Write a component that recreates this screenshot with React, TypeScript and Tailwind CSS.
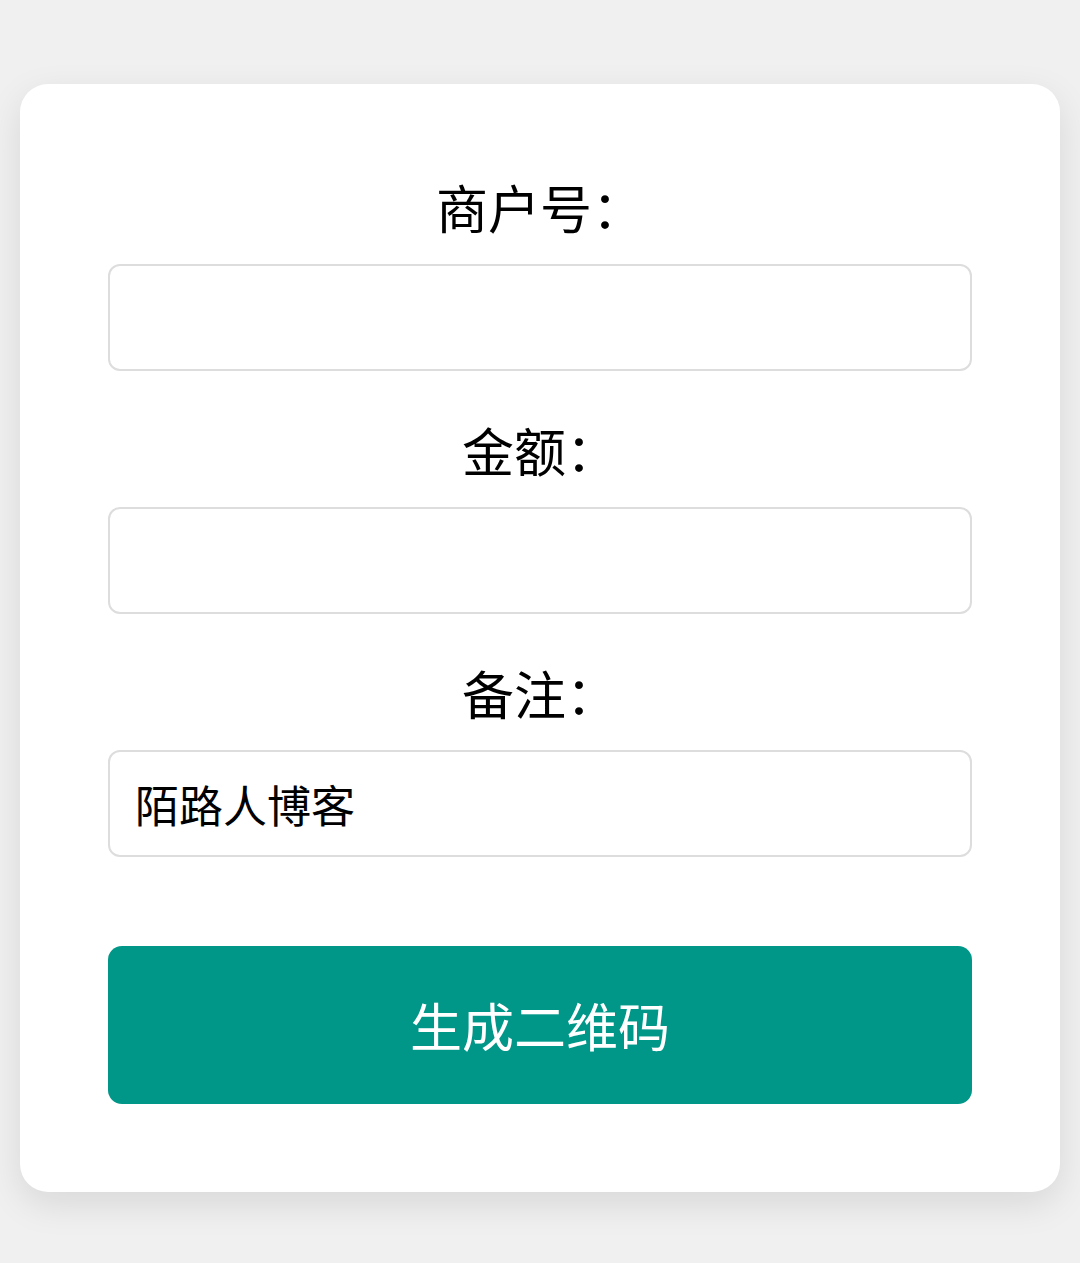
import { useState } from "react";

const font = "font-['Noto_Sans_CJK_SC','Noto_Sans',sans-serif]";

function Field({ label, value, onChange }: { label: string; value: string; onChange: (v: string) => void }) {
  return (
    <div className="flex flex-col">
      <label className="text-center text-[52px] leading-[75px] text-black">{label}</label>
      <input
        value={value}
        onChange={(e) => onChange(e.target.value)}
        className="mt-5 h-[107px] w-full rounded-xl border-2 border-[#dddddd] bg-white px-[25px] text-[44px] text-black outline-none"
      />
    </div>
  );
}

export default function App() {
  const [merchant, setMerchant] = useState("");
  const [amount, setAmount] = useState("");
  const [remark, setRemark] = useState("陌路人博客");

  return (
    <div className={`min-h-[1263px] bg-[#f0f0f0] pt-[84px] ${font}`}>
      <div className="mx-5 rounded-[28px] bg-white px-[88px] pt-[85px] pb-[88px] shadow-[0_12px_36px_rgba(0,0,0,0.1)]">
        <div className="flex flex-col gap-[41px]">
          <Field label="商户号：" value={merchant} onChange={setMerchant} />
          <Field label="金额：" value={amount} onChange={setAmount} />
          <Field label="备注：" value={remark} onChange={setRemark} />
        </div>
        <button
          type="button"
          className="mt-[89px] h-[158px] w-full rounded-[14px] bg-[#009688] text-[52px] text-white"
        >
          生成二维码
        </button>
      </div>
    </div>
  );
}
